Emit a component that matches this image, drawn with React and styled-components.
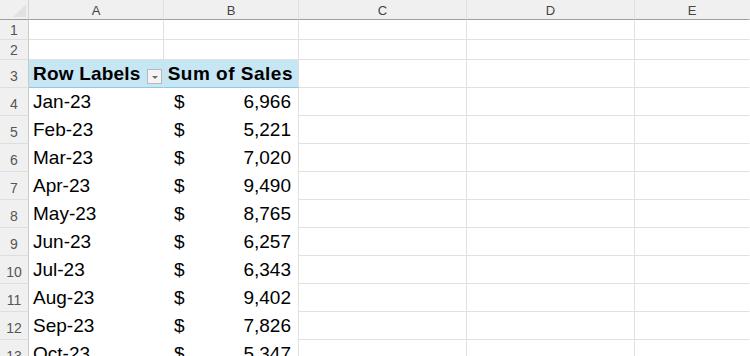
import React from "react";
import styled, { createGlobalStyle } from "styled-components";

const Global = createGlobalStyle`
  html, body { margin: 0; padding: 0; background: #ffffff; }
  body { font-family: "Liberation Sans", Arial, sans-serif; overflow: hidden; }
`;

const COLS = ["A", "B", "C", "D", "E"];
const WIDTHS = "29px 135px 135px 168px 168px 1fr";

const Sheet = styled.div`
  display: grid;
  grid-template-columns: ${WIDTHS};
  width: 750px;
  height: 356px;
  overflow: hidden;
  grid-auto-rows: 28px;
  grid-template-rows: 20px 20px 20px 28px;
  align-content: start;
`;

const Corner = styled.div`
  position: relative;
  background: #f0f0f0;
  border-right: 1px solid #d4d4d4;
  border-bottom: 1px solid #9e9e9e;
  box-sizing: border-box;
  &::after {
    content: "";
    position: absolute;
    right: 2px;
    bottom: 2px;
    width: 0;
    height: 0;
    border-left: 13px solid transparent;
    border-bottom: 13px solid #e2e2e2;
  }
`;

const ColHead = styled.div`
  background: #f0f0f0;
  border-right: 1px solid ${(p) => (p.$last ? "transparent" : "#e0e0e0")};
  border-bottom: 1px solid #9e9e9e;
  box-sizing: border-box;
  display: flex;
  align-items: center;
  justify-content: center;
  font-family: "Liberation Sans", Arial, sans-serif;
  font-size: 13px;
  color: #444444;
  padding-top: 1px;
`;

const RowHead = styled.div`
  background: #f0f0f0;
  border-right: 1px solid #c8c8c8;
  border-bottom: 1px solid #dedede;
  box-sizing: border-box;
  display: flex;
  align-items: center;
  justify-content: center;
  font-family: "Liberation Sans", Arial, sans-serif;
  font-size: 14px;
  color: #555555;
  padding-top: ${(p) => (p.$tall ? "4px" : "1px")};
`;

const Cell = styled.div`
  background: #ffffff;
  border-right: 1px solid ${(p) => (p.$noRight ? "transparent" : "#e1e1e1")};
  border-bottom: 1px solid ${(p) => (p.$noBottom ? "transparent" : "#e1e1e1")};
  box-sizing: border-box;
`;

const HeaderCell = styled.div`
  background: #c6e6f4;
  border-bottom: 1px solid #8cc9e8;
  border-right: 1px solid ${(p) => (p.$right ? "#e1e1e1" : "transparent")};
  box-sizing: border-box;
  display: flex;
  align-items: flex-end;
  padding: 0 0 2px 4px;
  font-family: "Liberation Sans", Arial, sans-serif;
  font-weight: bold;
  font-size: 19px;
  letter-spacing: ${(p) => (p.$right ? "0.5px" : "0.2px")};
  color: #000;
  white-space: nowrap;
  justify-content: ${(p) => (p.$right ? "flex-end" : "space-between")};
  padding-right: ${(p) => (p.$right ? "5px" : "1px")};
`;

const DropBtn = styled.span`
  width: 15px;
  height: 15px;
  box-sizing: border-box;
  border: 1px solid #b8b8b8;
  background: #f4f4f4;
  display: flex;
  align-items: center;
  justify-content: center;
  margin-bottom: 1px;
  &::after {
    content: "";
    width: 0;
    height: 0;
    border-left: 3px solid transparent;
    border-right: 3px solid transparent;
    border-top: 3px solid #6b6b6b;
    margin-top: 2px;
  }
`;

const LabelCell = styled.div`
  background: #ffffff;
  box-sizing: border-box;
  display: flex;
  align-items: flex-end;
  padding: 0 0 3px 4px;
  font-family: "Liberation Sans", Arial, sans-serif;
  font-size: 19px;
  color: #000;
  white-space: nowrap;
`;

const ValueCell = styled.div`
  background: #ffffff;
  border-right: 1px solid #e1e1e1;
  box-sizing: border-box;
  display: flex;
  align-items: flex-end;
  justify-content: space-between;
  padding: 0 7px 3px 10px;
  font-family: "Liberation Sans", Arial, sans-serif;
  font-size: 19px;
  color: #000;
  white-space: nowrap;
`;

const data = [
  ["Jan-23", "6,966"],
  ["Feb-23", "5,221"],
  ["Mar-23", "7,020"],
  ["Apr-23", "9,490"],
  ["May-23", "8,765"],
  ["Jun-23", "6,257"],
  ["Jul-23", "6,343"],
  ["Aug-23", "9,402"],
  ["Sep-23", "7,826"],
  ["Oct-23", "5,347"],
];

function EmptyRest() {
  return (
    <>
      <Cell />
      <Cell />
      <Cell $noRight />
    </>
  );
}

export default function App() {
  return (
    <>
      <Global />
      <Sheet>
        <Corner />
        {COLS.map((c, i) => (
          <ColHead key={c} $last={i === COLS.length - 1}>
            {c}
          </ColHead>
        ))}

        {[1, 2].map((r) => (
          <React.Fragment key={r}>
            <RowHead>{r}</RowHead>
            <Cell />
            <Cell />
            <EmptyRest />
          </React.Fragment>
        ))}

        <RowHead $tall>3</RowHead>
        <HeaderCell>
          <span>Row Labels</span>
          <DropBtn />
        </HeaderCell>
        <HeaderCell $right>Sum of Sales</HeaderCell>
        <EmptyRest />

        {data.map(([m, v], i) => (
          <React.Fragment key={m}>
            <RowHead $tall>{i + 4}</RowHead>
            <LabelCell>{m}</LabelCell>
            <ValueCell>
              <span>$</span>
              <span>{v}</span>
            </ValueCell>
            <EmptyRest />
          </React.Fragment>
        ))}
      </Sheet>
    </>
  );
}
